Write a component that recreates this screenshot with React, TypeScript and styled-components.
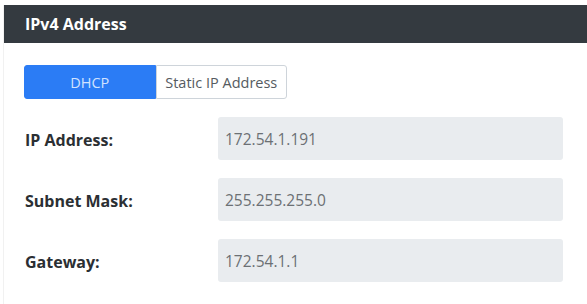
import styled, { createGlobalStyle } from "styled-components";

const GlobalStyle = createGlobalStyle`
  body {
    margin: 0;
    background: #ffffff;
    font-family: "Open Sans", "Noto Sans", sans-serif;
    color: #212529;
  }
`;

const Page = styled.div`
  padding: 5px 0 0 3px;
`;

const Card = styled.section`
  background: #ffffff;
  border-left: 1px solid #f1f1f1;
  padding-bottom: 22px;
`;

const Header = styled.header`
  background: #343a40;
  color: #ffffff;
  font-size: 16px;
  font-weight: 700;
  height: 38px;
  display: flex;
  align-items: center;
  padding-left: 21px;
`;

const Body = styled.div`
  padding: 22px 0 0 20px;
  display: flex;
  flex-direction: column;
  gap: 18px;
`;

const Toggle = styled.div`
  display: flex;
  width: 263px;
  height: 34px;
`;

const ToggleButton = styled.button<{ $active?: boolean }>`
  flex: 1;
  font-family: inherit;
  font-size: 14.5px;
  border: 1px solid ${(p) => (p.$active ? "#2b7cf5" : "#ced4da")};
  background: ${(p) => (p.$active ? "#2b7cf5" : "#ffffff")};
  color: ${(p) => (p.$active ? "#d2e3ff" : "#555b61")};
  border-radius: ${(p) => (p.$active ? "3px 0 0 3px" : "0 3px 3px 0")};
  padding: 0;
`;

const Rows = styled.div`
  display: flex;
  flex-direction: column;
  gap: 18px;
`;

const Row = styled.div`
  display: flex;
  align-items: center;
`;

const Label = styled.label`
  width: 193px;
  font-size: 16px;
  font-weight: 700;
  color: #2b2f33;
  padding-left: 1px;
  padding-top: 2px;
`;

const Value = styled.div`
  width: 345px;
  height: 43px;
  box-sizing: border-box;
  background: #e9ecef;
  border-radius: 3px;
  display: flex;
  align-items: center;
  padding-left: 7px;
  font-size: 15.5px;
  color: #6c7074;
`;

const fields = [
  { label: "IP Address:", value: "172.54.1.191" },
  { label: "Subnet Mask:", value: "255.255.255.0" },
  { label: "Gateway:", value: "172.54.1.1" },
];

export default function App() {
  return (
    <>
      <GlobalStyle />
      <Page>
        <Card>
          <Header>IPv4 Address</Header>
          <Body>
            <Toggle>
              <ToggleButton $active>DHCP</ToggleButton>
              <ToggleButton>Static IP Address</ToggleButton>
            </Toggle>
            <Rows>
              {fields.map((f) => (
                <Row key={f.label}>
                  <Label>{f.label}</Label>
                  <Value>{f.value}</Value>
                </Row>
              ))}
            </Rows>
          </Body>
        </Card>
      </Page>
    </>
  );
}
